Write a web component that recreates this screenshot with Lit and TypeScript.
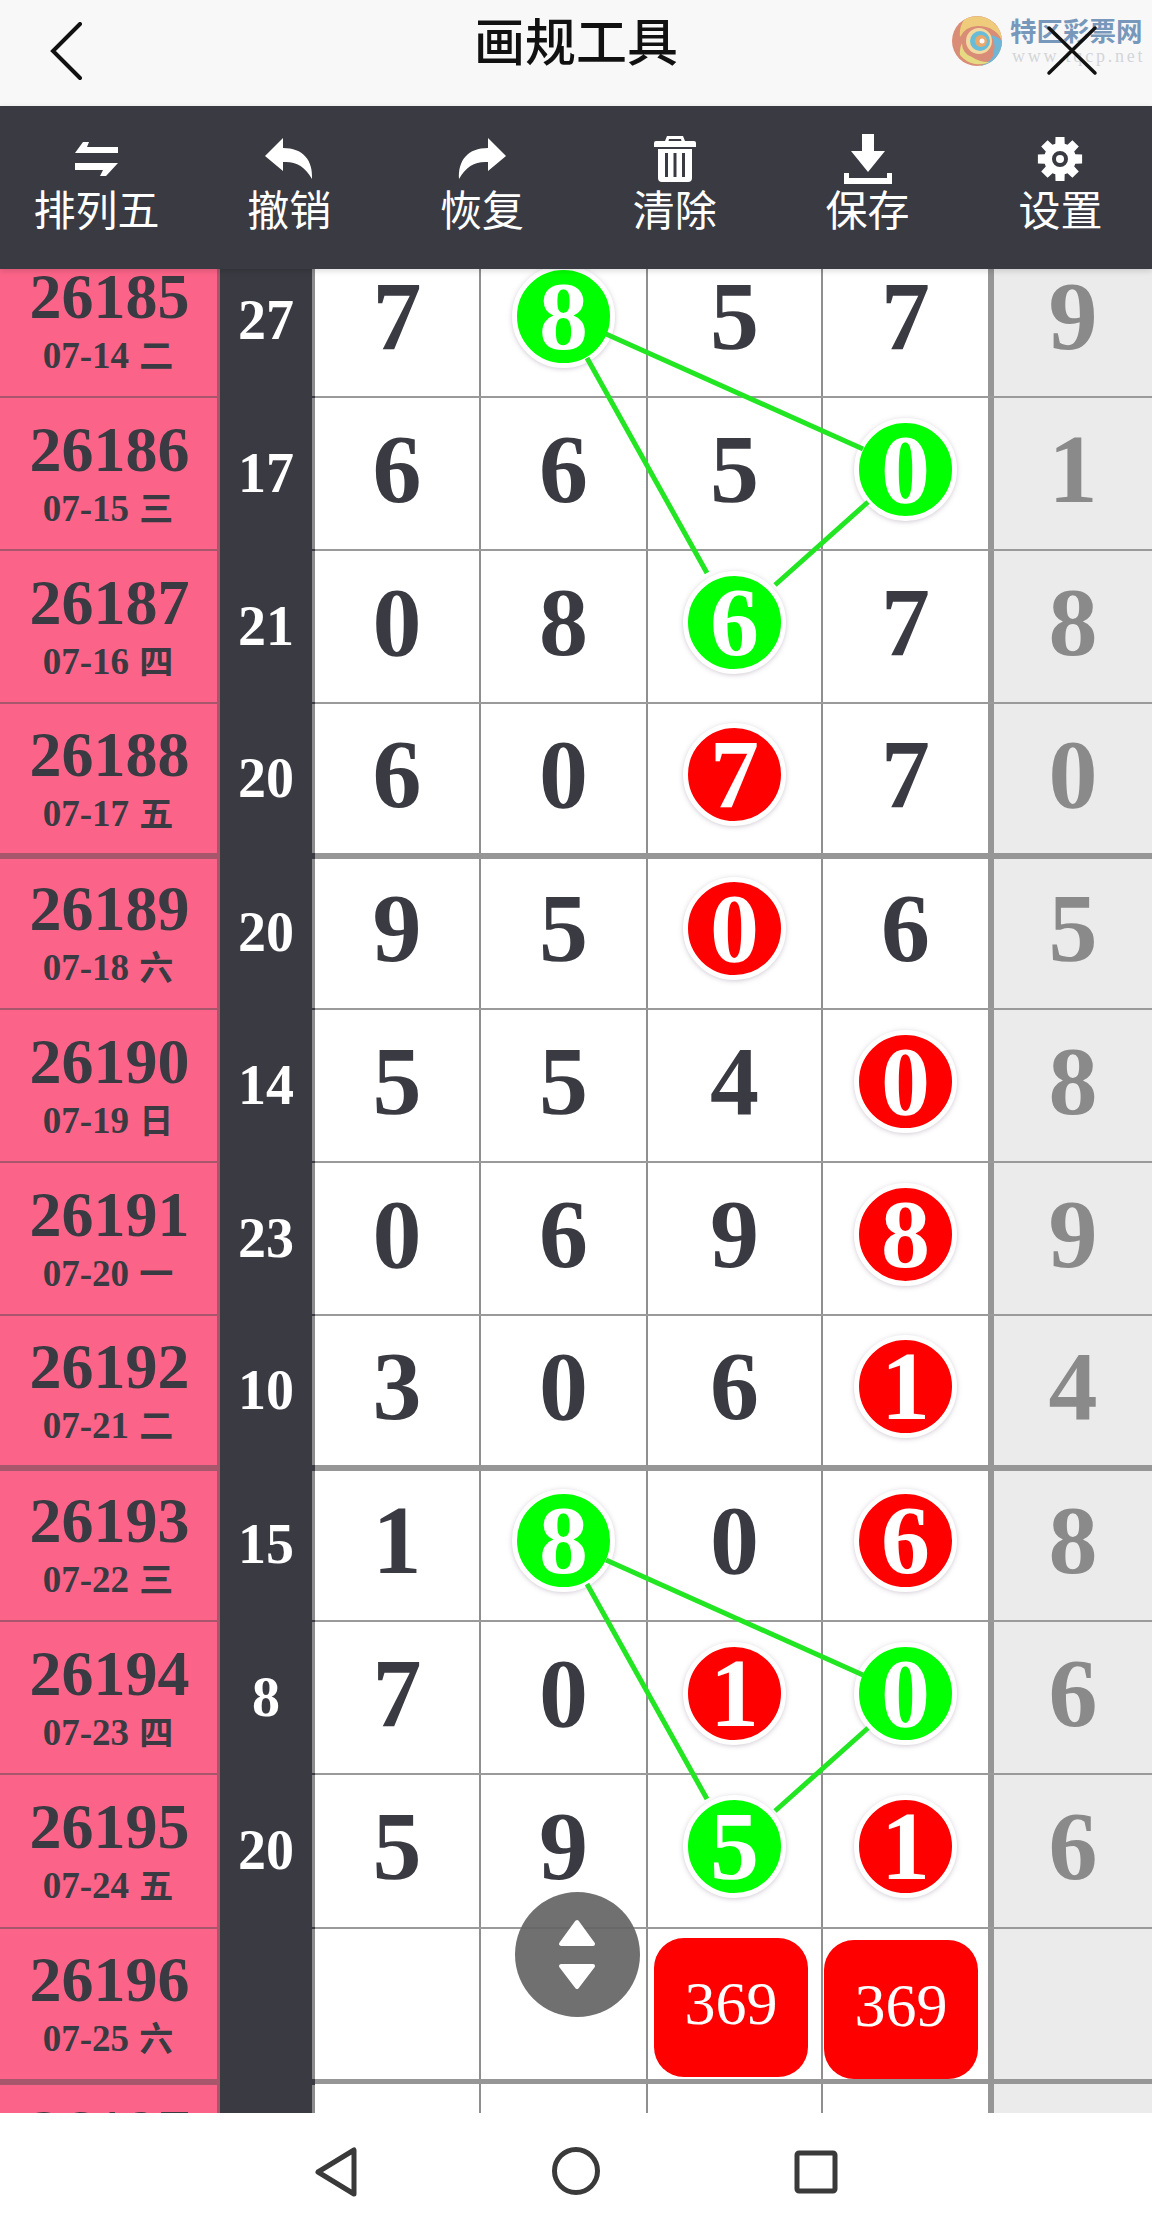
import { LitElement, html, css, svg } from "lit";
import { customElement } from "lit/decorators.js";

type Mark = "g" | "r" | "";

interface Row {
  issue: string;
  date: string;
  sum: string;
  nums: string[];
  marks: Mark[];
}

const WEEK = ["二", "三", "四", "五", "六", "日", "一"];

// ball marks per row: index into nums => colour
const DATA: [string, string[], Record<number, Mark>][] = [
  ["27", ["7", "8", "5", "7", "9"], { 1: "g" }],
  ["17", ["6", "6", "5", "0", "1"], { 3: "g" }],
  ["21", ["0", "8", "6", "7", "8"], { 2: "g" }],
  ["20", ["6", "0", "7", "7", "0"], { 2: "r" }],
  ["20", ["9", "5", "0", "6", "5"], { 2: "r" }],
  ["14", ["5", "5", "4", "0", "8"], { 3: "r" }],
  ["23", ["0", "6", "9", "8", "9"], { 3: "r" }],
  ["10", ["3", "0", "6", "1", "4"], { 3: "r" }],
  ["15", ["1", "8", "0", "6", "8"], { 1: "g", 3: "r" }],
  ["8", ["7", "0", "1", "0", "6"], { 2: "r", 3: "g" }],
  ["20", ["5", "9", "5", "1", "6"], { 2: "g", 3: "r" }],
];

const rows: Row[] = DATA.map(([sum, nums, marks], i) => ({
  issue: String(26185 + i),
  date: `07-${14 + i}`,
  sum,
  nums,
  marks: nums.map((_, k) => marks[k] ?? ""),
}));

const TOOLS: [string, string][] = [
  ["排列五", "swap"],
  ["撤销", "undo"],
  ["恢复", "redo"],
  ["清除", "trash"],
  ["保存", "save"],
  ["设置", "gear"],
];

const gearPath = (() => {
  const cx = 23, cy = 23, out = 22.5, inn = 16;
  let d = "";
  for (let i = 0; i < 8; i++) {
    const a = (i * Math.PI) / 4 - Math.PI / 2;
    const w = 0.2, v = 0.3;
    const p = [
      [inn, a - v], [out, a - w], [out, a + w], [inn, a + v],
    ].map(([r, t]) => `${(cx + r * Math.cos(t)).toFixed(1)} ${(cy + r * Math.sin(t)).toFixed(1)}`);
    d += (i ? "L" : "M") + p.join("L");
  }
  return d + "Z";
})();

const ICONS: Record<string, unknown> = {
  swap: svg`<svg width="46" height="36" viewBox="0 0 46 36"><path fill="#fff" d="M16 1 H10 L2 12 H45 V6 H14 Z M2 22 V29 H30 L27 35 H33 L45 22 Z"/></svg>`,
  undo: svg`<svg width="48" height="42" viewBox="0 0 48 42"><path fill="#fff" d="M18 0 L0 18 L18 33 V24 C30 23 40 28 47 41 C48 22 38 10 18 10 Z"/></svg>`,
  redo: svg`<svg width="48" height="42" viewBox="0 0 48 42"><path fill="#fff" d="M30 0 L48 18 L30 33 V24 C18 23 8 28 1 41 C0 22 10 10 30 10 Z"/></svg>`,
  trash: svg`<svg width="42" height="46" viewBox="0 0 42 46"><path fill="#fff" fill-rule="evenodd" d="M13 0 H29 L31 5 H40 Q42 5 42 7 V11 H0 V7 Q0 5 2 5 H11 Z M15 3 L14.500 5 H27.500 L27 3 Z M4 13 H38 V42 Q38 46 34 46 H8 Q4 46 4 42 Z M11 17 V41 H14 V17 Z M19.500 17 V41 H22.500 V17 Z M28 17 V41 H31 V17 Z"/></svg>`,
  save: svg`<svg width="50" height="50" viewBox="0 0 50 50"><path fill="#fff" d="M19 0 H31 V17 H42 L25 38 L8 17 H19 Z M1 39 H6 V44 H44 V39 H49 V50 H1 Z"/></svg>`,
  gear: svg`<svg width="46" height="46" viewBox="0 0 46 46"><path fill="#fff" fill-rule="evenodd" d="${gearPath} M23 15 A8 8 0 1 0 23 31 A8 8 0 1 0 23 15 Z"/><circle cx="23" cy="23" r="4" fill="#fff"/></svg>`,
};

@customElement("app-root")
export class AppRoot extends LitElement {
  static styles = css`
    :host {
      display: block;
      width: 1152px;
      height: 2230px;
      overflow: hidden;
      background: #fff;
      font-family: "Liberation Serif", "Noto Sans CJK SC", serif;
      color: #3a3a42;
    }
    .title-bar {
      position: relative;
      height: 106px;
      background: #f8f8f8;
      display: flex;
      justify-content: center;
      font: 500 51px/78px "Noto Sans CJK SC", sans-serif;
      color: #111;
    }
    .back { position: absolute; left: 48px; top: 22px; }
    .logo { position: absolute; left: 950px; top: 8px; }
    .logo-name {
      position: absolute; left: 60px; top: 8px;
      font: 700 26.500px/28px "Noto Sans CJK SC", sans-serif;
      color: #7898bb;
      white-space: nowrap;
    }
    .logo-url {
      position: absolute; left: 62px; top: 38px;
      font: 400 18px/20px "Liberation Serif", serif;
      letter-spacing: 2.800px;
      color: #d3d5d8;
      white-space: nowrap;
    }
    .close { position: absolute; left: 1046px; top: 25px; }
    .tools {
      position: relative;
      z-index: 2;
      height: 163px;
      background: #3a3a42;
      box-shadow: 0 2px 6px rgba(0, 0, 0, 0.14);
      display: grid;
      grid-template-columns: repeat(6, 192.800px);
      overflow: visible;
    }
    .tool {
      display: flex;
      flex-direction: column;
      align-items: center;
      color: #fff;
      font: 400 42px/48px "Noto Sans CJK SC", sans-serif;
      padding-top: 28px;
      box-sizing: border-box;
    }
    .tool .ico {
      height: 50px;
      display: flex;
      align-items: center;
    }
    .sheet {
      position: relative;
      height: 1844px;
      overflow: hidden;
    }
    .rows { margin-top: -24px; }
    .row {
      display: grid;
      grid-template-columns: 220px 95px 166px 167px 175px 171px 158px;
      height: 153.05px;
      box-sizing: border-box;
      border-bottom: 2px solid #9a9a9a;
    }
    .row.thick {
      position: relative;
      z-index: 1;
      border-bottom: 4px solid #969696;
      box-shadow: 0 2px 0 #969696;
    }
    .cell-issue {
      background: #fb6488;
      display: flex;
      flex-direction: column;
      align-items: center;
      justify-content: center;
      font-weight: 700;
      box-shadow: inset -3px 0 0 #a8566b, 0 2px 0 #a8566b;
      padding-bottom: 5px;
    }
    .thick .cell-issue { box-shadow: inset -3px 0 0 #a8566b, 0 6px 0 #a8566b; }
    .issue { font-size: 64px; line-height: 72px; margin-right: 1px; }
    .date { font-size: 37px; line-height: 40px; margin-top: 1px; margin-right: 4px; }
    .date span { font: 700 34px/40px "Noto Sans CJK SC", sans-serif; margin-left: 1px; }
    .cell-sum {
      background: #3a3a42;
      color: #fff;
      font-size: 56px;
      font-weight: 700;
      display: flex;
      align-items: center;
      justify-content: center;
      box-shadow: 0 6px 0 #3a3a42;
      border-right: 3px solid #8c8c8c;
      padding-bottom: 2px;
      box-sizing: border-box;
    }
    .cell {
      display: flex;
      align-items: center;
      justify-content: center;
      padding-bottom: 9px;
      font-size: 98px;
      font-weight: 700;
      line-height: 1;
      border-right: 2px solid #8f8f8f;
      background: #fff;
    }
    .cell.c4 { border-right-width: 6px; border-right-color: #969696; }
    .cell.extra { background: #ebebeb; color: #8a8a8a; border-right: 0; }
    .ball {
      position: relative;
      z-index: 1;
      width: 93px;
      height: 93px;
      border-radius: 50%;
      display: flex;
      align-items: center;
      justify-content: center;
      color: #fff;
      font-size: 98px;
      line-height: 93px;
      border: 5px solid #fff;
      box-shadow: 0 1px 5px rgba(120, 100, 130, 0.35);
    }
    .ball.g { background: #00ff00; }
    .ball.r { background: #ff0000; }
    .cell.has-tag { align-items: flex-start; padding-bottom: 0; }
    .tag {
      width: 154px;
      height: 139px;
      background: #ff0000;
      border-radius: 30px;
      color: #fff;
      font: 400 62px/130px "Liberation Serif", serif;
      text-align: center;
      margin: 9px 7px 0 0;
    }
    .tag.b { margin: 11px 9px 0 0; }
    .lines {
      position: absolute;
      left: 0;
      top: -269px;
      width: 1152px;
      height: 2230px;
      pointer-events: none;
      z-index: 2;
    }
    .stepper {
      position: absolute;
      left: 515px;
      top: 1623px;
      width: 125px;
      height: 125px;
      border-radius: 50%;
      background: rgba(100, 100, 100, 0.92);
      z-index: 3;
    }
    .nav { position: relative; height: 117px; background: #fff; }
    .nav svg { position: absolute; left: 0; top: 0; }
  `;

  private renderRow(r: Row, i: number) {
    const day = WEEK[i % 7];
    return html`
      <div class="row ${(i + 1) % 4 === 0 ? "thick" : ""}">
        <div class="cell-issue">
          <div class="issue">${r.issue}</div>
          <div class="date">${r.date} <span>${day}</span></div>
        </div>
        <div class="cell-sum">${r.sum}</div>
        ${r.nums.map((n, k) => {
          const cls = k === 4 ? "extra" : k === 3 ? "c4" : "";
          return html`<div class="cell ${cls}">
            ${r.marks[k] ? html`<div class="ball ${r.marks[k]}">${n}</div>` : n}
          </div>`;
        })}
      </div>
    `;
  }

  render() {
    return html`
      <div class="title-bar">
        <svg class="back" width="36" height="60" viewBox="0 0 36 60"><path d="M32 2 L5 29 L32 56" fill="none" stroke="#111" stroke-width="4" stroke-linecap="round"/></svg>
        画规工具
        <div class="logo">
          <svg width="54" height="56" viewBox="0 0 54 56">
            <circle cx="27" cy="28" r="25" fill="#d98c76"/>
            <path d="M14 7 A25 25 0 0 1 52 30 A24 18 0 0 0 27 13 A20 20 0 0 0 10 24 A18 22 0 0 1 14 7 Z" fill="#efcc7c"/>
            <path d="M52 28 A25 25 0 0 1 30 53 A22 16 0 0 0 44 38 A18 18 0 0 0 40 22 A20 20 0 0 1 52 28 Z" fill="#6fb6d6"/>
            <path d="M10 42 A25 25 0 0 0 40 49 A24 18 0 0 1 22 44 A14 14 0 0 1 12 30 A20 20 0 0 0 10 42 Z" fill="#e6da82"/>
            <circle cx="29" cy="28" r="13" fill="#f3d9a0"/>
            <circle cx="30" cy="28" r="10" fill="#69bcd8"/>
            <circle cx="31" cy="28" r="6" fill="#e9a86c"/>
            <circle cx="32" cy="28" r="2.500" fill="#f8f8f8"/>
          </svg>
          <div class="logo-name">特区彩票网</div>
          <div class="logo-url">www.tqcp.net</div>
        </div>
        <svg class="close" width="52" height="52" viewBox="0 0 52 52"><path d="M3 3 L49 48 M49 3 L3 48" fill="none" stroke="#111" stroke-width="3.500" stroke-linecap="round"/></svg>
      </div>
      <div class="tools">
        ${TOOLS.map(
          ([label, icon]) => html`<div class="tool">
            <div class="ico">${ICONS[icon]}</div>
            <div class="label">${label}</div>
          </div>`
        )}
      </div>
      <div class="sheet">
        <div class="rows">
          ${rows.map((r, i) => this.renderRow(r, i))}
          <div class="row thick">
            <div class="cell-issue">
              <div class="issue">26196</div>
              <div class="date">07-25 <span>六</span></div>
            </div>
            <div class="cell-sum"></div>
            <div class="cell"></div>
            <div class="cell"></div>
            <div class="cell has-tag"><div class="tag">369</div></div>
            <div class="cell c4 has-tag"><div class="tag b">369</div></div>
            <div class="cell extra"></div>
          </div>
          <div class="row">
            <div class="cell-issue">
              <div class="issue">26197</div>
              <div class="date">07-26 <span>日</span></div>
            </div>
            <div class="cell-sum"></div>
            <div class="cell"></div>
            <div class="cell"></div>
            <div class="cell"></div>
            <div class="cell c4"></div>
            <div class="cell extra"></div>
          </div>
        </div>
        <svg class="lines" viewBox="0 0 1152 2230">
          <g fill="none" stroke="#22e622" stroke-width="5">
            <path d="M606 334 L863 449 M868 502 L775 585 M587 358 L707 573"/>
            <path d="M606 1560 L863 1675 M868 1728 L775 1811 M587 1584 L707 1799"/>
          </g>
        </svg>
        <div class="stepper">
          <svg width="125" height="125" viewBox="0 0 125 125">
            <path fill="#fff" stroke="#fff" stroke-width="4" stroke-linejoin="round" d="M62 30 L46 52 H78 Z M46 74 H78 L62 95 Z"/>
          </svg>
        </div>
      </div>
      <div class="nav">
        <svg width="1152" height="117" viewBox="0 0 1152 117">
          <g fill="none" stroke="#3a3a3a" stroke-width="5" stroke-linejoin="round">
            <path d="M318 59 L354 37 V81 Z"/>
            <circle cx="576" cy="58" r="21.500"/>
            <rect x="797" y="40" width="38" height="38" rx="2"/>
          </g>
        </svg>
      </div>
    `;
  }
}
